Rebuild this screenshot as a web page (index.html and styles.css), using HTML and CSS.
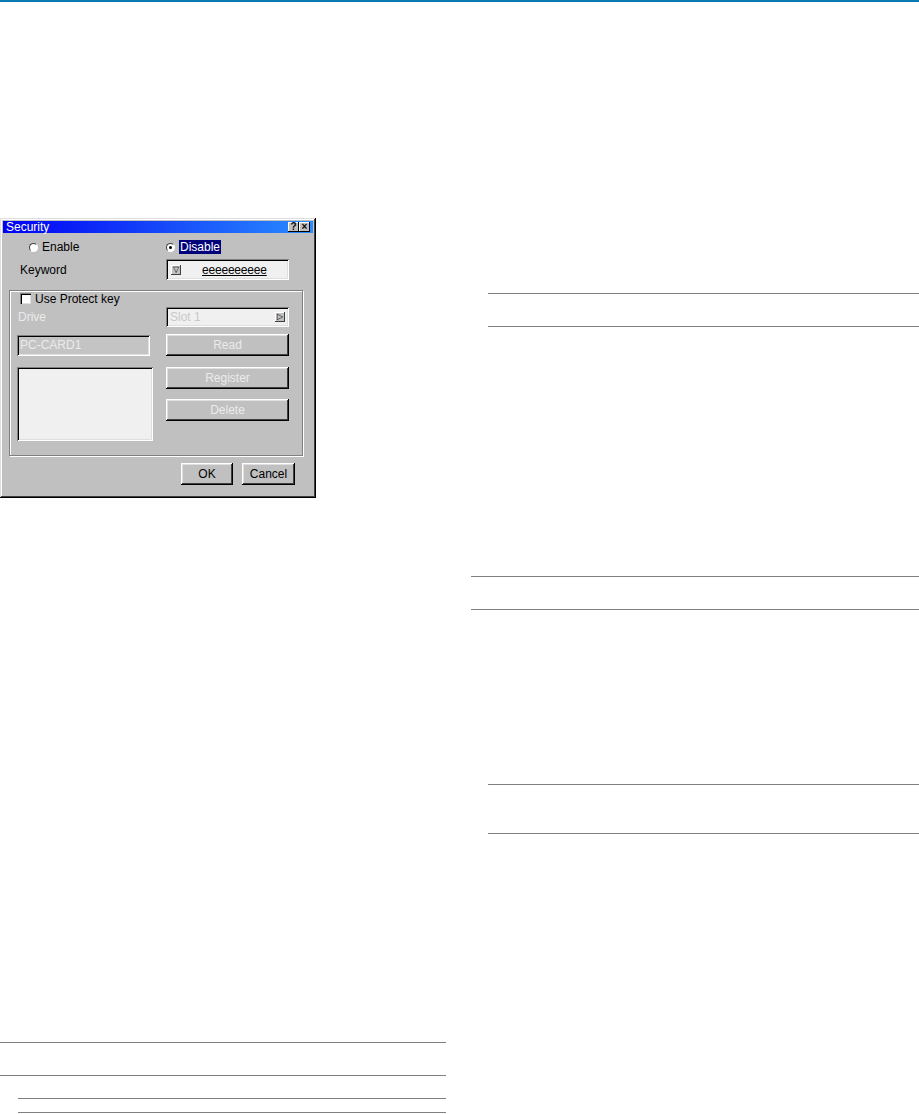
FILE: index.html
```html
<!DOCTYPE html>
<html lang="en">

<head>
    <meta charset="UTF-8">
    <meta name="viewport" content="width=device-width, initial-scale=1.0">
    <title>Security</title>
    <link rel="stylesheet" href="styles.css">
</head>

<body>
    <div class="topline"></div>
    <div class="page">
        <div class="col col-left">
            <div class="dialog">
                <div class="titlebar">
                    <span class="title">Security</span>
                    <span class="title-btns">
                        <span class="tbtn">?</span>
                        <span class="tbtn">&times;</span>
                    </span>
                </div>
                <div class="radios">
                    <label class="radio"><span class="dot"></span>Enable</label>
                    <label class="radio checked"><span class="dot"></span><span class="sel">Disable</span></label>
                </div>
                <div class="keyword">
                    <span class="lbl">Keyword</span>
                    <div class="field keyfield">
                        <span class="mini-btn">&#9661;</span>
                        <span class="keytext">eeeeeeeeee</span>
                    </div>
                </div>
                <div class="group">
                    <label class="check"><span class="box"></span>Use Protect key</label>
                    <div class="group-grid">
                        <div class="group-left">
                            <div class="drive off">Drive</div>
                            <div class="field card off">PC-CARD1</div>
                            <div class="field list"></div>
                        </div>
                        <div class="group-right">
                            <div class="field slot">
                                <span class="off">Slot 1</span>
                                <span class="mini-btn">&#9655;</span>
                            </div>
                            <button class="btn off read">Read</button>
                            <button class="btn off register">Register</button>
                            <button class="btn off delete">Delete</button>
                        </div>
                    </div>
                </div>
                <div class="actions">
                    <button class="btn ok">OK</button>
                    <button class="btn cancel">Cancel</button>
                </div>
            </div>

            <div class="rule-box left-a"></div>
            <div class="rule-box left-b"></div>
        </div>

        <div class="col col-right">
            <div class="rule-box right-a"></div>
            <div class="rule-box right-b"></div>
            <div class="rule-box right-c"></div>
        </div>
    </div>
</body>

</html>
```

FILE: styles.css
```css
body {
    margin: 0;
    padding: 0;
    background-color: #ffffff;
    font-family: "Liberation Sans", Arial, sans-serif;
    width: 919px;
    height: 1114px;
    overflow: hidden;
}

.topline {
    height: 2px;
    background-color: #0a7ab0;
}

.page {
    display: grid;
    grid-template-columns: 446px 448px;
    column-gap: 25px;
}

.col {
    display: flex;
    flex-direction: column;
}

/* table rules */

.rule-box {
    border-top: 1px solid #808080;
    border-bottom: 1px solid #808080;
}

.left-a {
    margin-top: 544px;
    height: 32px;
}

.left-b {
    margin-top: 22px;
    margin-left: 18px;
    height: 13px;
}

.right-a {
    margin-top: 291px;
    margin-left: 17px;
    height: 32px;
}

.right-b {
    margin-top: 249px;
    height: 32px;
}

.right-c {
    margin-top: 174px;
    margin-left: 17px;
    height: 48px;
}

/* dialog */

.dialog {
    width: 316px;
    height: 280px;
    margin-top: 216px;
    box-sizing: border-box;
    padding: 3px;
    background-color: #c0c0c0;
    box-shadow: inset -1px -1px #000000, inset 1px 1px #dfdfdf, inset -2px -2px #404040, inset 2px 2px #ffffff;
    font-size: 12px;
    color: #000000;
    display: flex;
    flex-direction: column;
}

.titlebar {
    height: 12px;
    background: linear-gradient(to right, #0000f4, #2a8cff);
    color: #ffffff;
    display: flex;
    align-items: center;
    justify-content: space-between;
    padding: 0 3px 0 3px;
}

.title {
    line-height: 12px;
}

.title-btns {
    display: flex;
}

.tbtn {
    width: 11px;
    height: 10px;
    background-color: #c0c0c0;
    box-shadow: inset -1px -1px #000000, inset 1px 1px #ffffff;
    color: #000000;
    font-size: 10px;
    font-weight: bold;
    line-height: 10px;
    text-align: center;
}

.radios {
    margin-top: 7px;
    height: 14px;
    padding-left: 26px;
    display: grid;
    grid-template-columns: 137px auto;
    align-items: center;
}

.radio {
    display: flex;
    align-items: center;
    gap: 4px;
}

.dot {
    width: 9px;
    height: 9px;
    border-radius: 50%;
    background-color: #ffffff;
    box-sizing: border-box;
    border: 1px solid;
    border-color: #404040 #ffffff #ffffff #404040;
    display: flex;
    align-items: center;
    justify-content: center;
}

.radio.checked .dot::after {
    content: "";
    width: 3px;
    height: 3px;
    border-radius: 50%;
    background-color: #000000;
}

.sel {
    background-color: #00007a;
    color: #ffffff;
    padding: 0 1px;
    line-height: 14px;
}

.keyword {
    margin-top: 5px;
    height: 21px;
    padding-left: 17px;
    display: flex;
    align-items: center;
}

.lbl {
    width: 146px;
}

.field {
    box-sizing: border-box;
    background-color: #f0f0f0;
    box-shadow: inset 1px 1px #808080, inset -1px -1px #ffffff, inset 2px 2px #000000, inset -2px -2px #dfdfdf;
}

.keyfield {
    width: 123px;
    height: 21px;
    display: flex;
    align-items: center;
    padding-left: 5px;
}

.mini-btn {
    width: 10px;
    height: 10px;
    background-color: #c0c0c0;
    box-shadow: inset -1px -1px #404040, inset 1px 1px #ffffff;
    font-size: 8px;
    line-height: 10px;
    text-align: center;
    color: #000000;
}

.keytext {
    margin-left: 21px;
    text-decoration: underline;
    letter-spacing: -0.2px;
}

.group {
    margin-top: 10px;
    margin-left: 6px;
    width: 294px;
    height: 166px;
    box-sizing: border-box;
    border: 1px solid #808080;
    box-shadow: inset 1px 1px #ffffff, 1px 1px #ffffff;
    padding: 2px 0 0 10px;
}

.check {
    display: flex;
    align-items: center;
    gap: 4px;
    height: 11px;
}

.box {
    width: 11px;
    height: 11px;
    box-sizing: border-box;
    background-color: #ffffff;
    box-shadow: inset 1px 1px #808080, inset 2px 2px #000000, inset -1px -1px #dfdfdf;
}

.group-grid {
    margin-top: 3px;
    margin-left: -3px;
    display: grid;
    grid-template-columns: 136px 123px;
    column-gap: 13px;
}

.group-left,
.group-right {
    display: flex;
    flex-direction: column;
}

.off {
    color: #ebebeb;
}

.drive {
    height: 20px;
    line-height: 20px;
    padding-left: 1px;
}

.card {
    width: 133px;
    height: 21px;
    margin-top: 8px;
    background-color: #c4c4c4;
    line-height: 21px;
    padding-left: 3px;
}

.list {
    height: 74px;
    margin-top: 11px;
}

.slot {
    height: 20px;
    display: flex;
    align-items: center;
    justify-content: space-between;
    padding: 0 4px 0 4px;
}

.slot .off {
    color: #c8c8c8;
}

.btn {
    height: 22px;
    border: none;
    padding: 0;
    background-color: #c0c0c0;
    box-shadow: inset -1px -1px #000000, inset 1px 1px #ffffff, inset -2px -2px #404040, inset 2px 2px #dfdfdf;
    font-family: "Liberation Sans", Arial, sans-serif;
    font-size: 12px;
}

.btn.off {
    color: #ebebeb;
}

.read {
    margin-top: 7px;
}

.register {
    margin-top: 11px;
}

.delete {
    margin-top: 10px;
}

.actions {
    margin-top: 7px;
    padding-right: 18px;
    display: flex;
    justify-content: flex-end;
    gap: 9px;
}

.ok {
    width: 52px;
    color: #000000;
}

.cancel {
    width: 53px;
    color: #000000;
}
```
